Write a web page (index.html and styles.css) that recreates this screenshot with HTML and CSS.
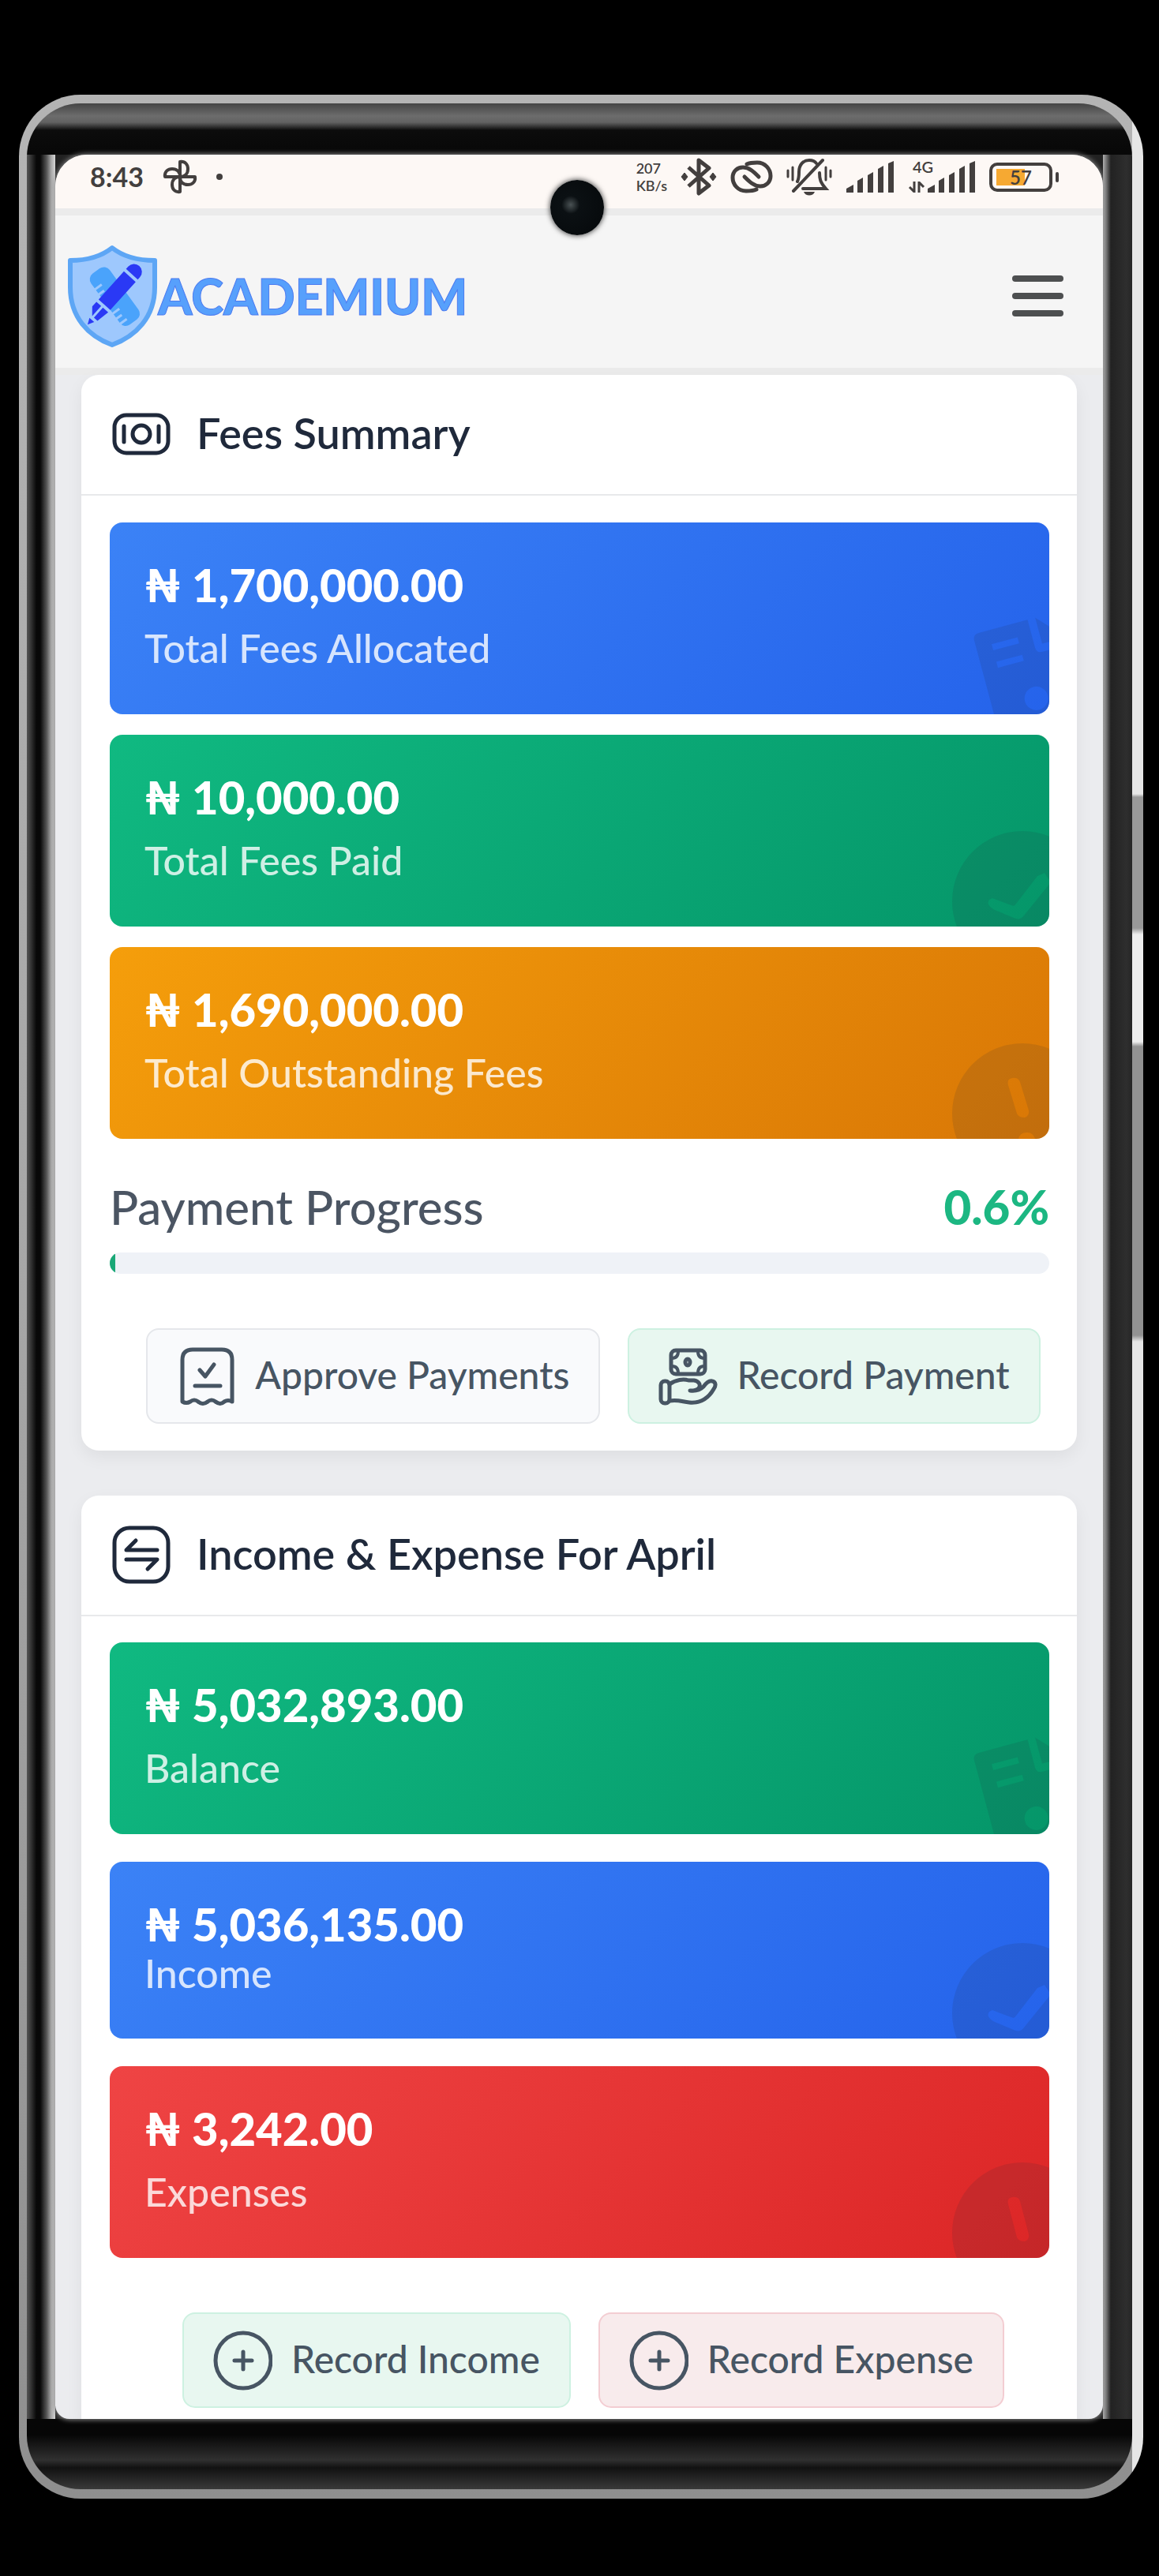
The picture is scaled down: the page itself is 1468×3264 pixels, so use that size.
FILE: index.html
```html
<!DOCTYPE html>
<html lang="en">
<head>
<meta charset="utf-8">
<meta name="viewport" content="width=device-width, initial-scale=1">
<title>Academium</title>
<link rel="stylesheet" href="styles.css">
</head>
<body>
<div class="phone">
<div class="bezel">
<div class="screen">

  <div class="status">
    <span class="clock">8:43</span>
    <svg class="ic-fan" width="44" height="44" viewBox="0 0 44 44" fill="none" stroke="currentColor" stroke-width="4" stroke-linejoin="round"><path d="M22 22V3c7-1 10 4 10 9 0 6-4 10-10 10zM22 22h19c1 7-4 10-9 10-6 0-10-4-10-10zM22 22v19c-7 1-10-4-10-9 0-6 4-10 10-10zM22 22H3c-1-7 4-10 9-10 6 0 10 4 10 10z"/></svg>
    <span class="dot"></span>
    <div class="indicators">
      <span class="speed">207<br>KB/s</span>
      <svg width="46" height="48" viewBox="0 0 46 48" fill="none" stroke="currentColor" stroke-width="5" stroke-linejoin="round"><path d="M10 12l26 23-13 10V3l13 10L10 36"/><path d="M5 19l4 5-4 5-4-5zM41 19l4 5-4 5-4-5z" fill="currentColor" stroke-width="1"/></svg>
      <svg width="54" height="42" viewBox="0 0 54 42" fill="none" stroke="currentColor" stroke-width="5" stroke-linecap="round"><path d="M21 5c4-2 8-2 13-2 10 0 17 8 17 17 0 8-6 13-13 13-8 0-14-6-20-12"/><path d="M33 37c-4 2-8 2-13 2C10 39 3 31 3 22 3 14 9 9 16 9c8 0 14 6 20 12"/></svg>
      <svg width="58" height="48" viewBox="0 0 58 48" fill="none" stroke="currentColor" stroke-width="4" stroke-linecap="round"><path d="M14 30c2-4 2-8 2-12 0-9 5-15 13-15 4 0 7 1 9 4M42 19c0 8 1 12 8 20H21M46 3L9 42"/><path d="M2 16v8M8 12v16M50 12v16M56 16v8" stroke-width="3"/><path d="M22 43h14c-2 6-12 6-14 0z" fill="currentColor" stroke="none"/></svg>
      <svg width="62" height="40" viewBox="0 0 62 40" fill="currentColor"><path d="M1 40v-5l9-5v10zM15 25l7-4v19h-7zM28 18l7-4v26h-7zM41 10l7-4v34h-7zM54 3l7-3v40h-7z"/></svg>
      <div class="mobile">
        <svg width="22" height="14" viewBox="0 0 22 14" fill="none" stroke="currentColor" stroke-width="3"><path d="M8 0v13L2 7M14 14V1l6 6"/></svg>
        <svg width="62" height="40" viewBox="0 0 62 40" fill="currentColor"><path d="M1 40v-5l9-5v10zM15 25l7-4v19h-7zM28 18l7-4v26h-7zM41 10l7-4v34h-7zM54 3l7-3v40h-7z"/></svg>
        <span class="gen">4G</span>
      </div>
      <div class="battery">57</div>
    </div>
  </div>

  <header class="topbar">
    <a class="brand" href="#">
      <svg width="115" height="130" viewBox="0 0 115 130"><path d="M57 4C72 16 90 20 111 20v34c0 38-24 62-54 73C27 116 4 92 4 54V20c20 0 38-4 53-16z" fill="#9ec8fd" stroke="#5da6f5" stroke-width="6" stroke-linejoin="round"/><g transform="rotate(-36 60 66)"><rect x="46" y="26" width="29" height="80" rx="9" fill="#4aa3fb"/><path d="M44 44h12M44 52h10M44 60h12M44 82h12M44 90h10M44 98h12" stroke="#9ec8fd" stroke-width="3"/></g><g transform="rotate(42 60 62)"><path d="M50 29v-4a10 10 0 0 1 20 0v4zM50 33h20v48H50zM50 85h8v17l-8-9zM61 85h9l-3 17h-6zM57 106h8l-4 8z" fill="#2a39f5"/></g></svg>
      <span class="brand-name">ACADEMIUM</span>
    </a>
    <button class="menu" type="button" aria-label="Menu"><span></span><span></span><span></span></button>
  </header>

  <main class="content">
    <section class="card">
      <h2 class="card-head">
        <svg width="76" height="76" viewBox="0 0 76 76" fill="none" stroke="currentColor" stroke-width="5" stroke-linecap="round"><rect x="4" y="14" width="68" height="48" rx="15"/><circle cx="38" cy="38" r="11"/><path d="M16 28v20M60 28v20"/></svg>
        <span>Fees Summary</span>
      </h2>
      <div class="card-body">
        <div class="tiles">
          <div class="tile blue">
            <strong class="amount">₦ 1,700,000.00</strong><span class="label">Total Fees Allocated</span>
            <svg class="mark" width="130" height="130" viewBox="0 0 130 130"><path transform="translate(33 29) rotate(-15)" fill-rule="evenodd" d="M8 0H72V36q0 8 8 8H130V150H0V8Q0 0 8 0zM20 18v8h34v-8zM20 41v8h34v-8zM42 99a15 15 0 1 0 30 0 15 15 0 1 0-30 0zM82 0l32 34H82z"/></svg>
          </div>
          <div class="tile green">
            <strong class="amount">₦ 10,000.00</strong><span class="label">Total Fees Paid</span>
            <svg class="mark" width="130" height="130" viewBox="0 0 130 130"><path fill-rule="evenodd" d="M7 98a89 89 0 1 0 178 0 89 89 0 1 0-178 0zM58 94q-7 2-5 8 2 4 8 7l24 10q8 4 13-3l34-42-8-12-9 4-27 35q-2 4-6 2z"/></svg>
          </div>
          <div class="tile orange">
            <strong class="amount">₦ 1,690,000.00</strong><span class="label">Total Outstanding Fees</span>
            <svg class="mark" width="130" height="130" viewBox="0 0 130 130"><path fill-rule="evenodd" d="M7 98a89 89 0 1 0 178 0 89 89 0 1 0-178 0zM78 62q-2-8 5-9 8-1 10 5l11 36q1 7-5 9-8 0-10-5zM91 130q2-8 10-8 8-1 11 8z"/></svg>
          </div>
        </div>
        <div class="progress-row"><span id="pp">Payment Progress</span><strong class="percent">0.6%</strong></div>
        <div class="track" role="progressbar" aria-labelledby="pp" aria-valuenow="0.6" aria-valuemin="0" aria-valuemax="100"><div class="fill" style="width:0.6%"></div></div>
        <div class="actions">
          <button class="btn" type="button">
            <svg width="75" height="76" viewBox="0 0 75 76" fill="none" stroke="currentColor" stroke-width="5" stroke-linecap="round" stroke-linejoin="round"><path d="M7 70V17Q7 4 20 4H57Q70 4 70 17V70q-5-3-10 0-5 5-11 0-5-4-10 0-6 5-12 0-5-4-10 0-5 3-10 0z"/><path d="M29 30l7 8 11-15M23 50h32"/></svg>
            <span>Approve Payments</span>
          </button>
          <button class="btn mint" type="button">
            <svg width="75" height="76" viewBox="0 0 75 76" fill="none" stroke="currentColor" stroke-width="5" stroke-linecap="round" stroke-linejoin="round"><rect x="16" y="5" width="43" height="30" rx="6"/><ellipse cx="37" cy="20" rx="3" ry="4"/><path d="M17 15q8 0 8-9M58 15q-8 0-8-9M17 25q8 0 8 9M58 25q-8 0-8 9" stroke-width="4"/><rect x="3" y="44" width="11" height="28" rx="5"/><path d="M14 48c8-6 18-7 24-5h7c6 1 8 5 7 8-1 4-5 5-12 5 8 1 13-1 17-5 3-4 7-8 11-7 5 1 5 6 2 10-8 14-20 18-31 17-9-1-15-4-25-2"/></svg>
            <span>Record Payment</span>
          </button>
        </div>
      </div>
    </section>

    <section class="card last">
      <h2 class="card-head">
        <svg width="76" height="76" viewBox="0 0 76 76" fill="none" stroke="currentColor" stroke-width="5" stroke-linecap="round" stroke-linejoin="round"><rect x="4" y="4" width="68" height="68" rx="19"/><path d="M58 32H19L31 20M19 44H58L46 56"/></svg>
        <span>Income &amp; Expense For April</span>
      </h2>
      <div class="card-body">
        <div class="tiles loose">
          <div class="tile green">
            <strong class="amount">₦ 5,032,893.00</strong><span class="label">Balance</span>
            <svg class="mark" width="130" height="130" viewBox="0 0 130 130"><path transform="translate(33 29) rotate(-15)" fill-rule="evenodd" d="M8 0H72V36q0 8 8 8H130V150H0V8Q0 0 8 0zM20 18v8h34v-8zM20 41v8h34v-8zM42 99a15 15 0 1 0 30 0 15 15 0 1 0-30 0zM82 0l32 34H82z"/></svg>
          </div>
          <div class="tile blue compact">
            <strong class="amount">₦ 5,036,135.00</strong><span class="label">Income</span>
            <svg class="mark" width="130" height="130" viewBox="0 0 130 130"><path fill-rule="evenodd" d="M7 98a89 89 0 1 0 178 0 89 89 0 1 0-178 0zM58 94q-7 2-5 8 2 4 8 7l24 10q8 4 13-3l34-42-8-12-9 4-27 35q-2 4-6 2z"/></svg>
          </div>
          <div class="tile red">
            <strong class="amount">₦ 3,242.00</strong><span class="label">Expenses</span>
            <svg class="mark" width="130" height="130" viewBox="0 0 130 130"><path fill-rule="evenodd" d="M7 98a89 89 0 1 0 178 0 89 89 0 1 0-178 0zM78 62q-2-8 5-9 8-1 10 5l11 42q1 7-5 9-8 0-10-5z"/></svg>
          </div>
        </div>
        <div class="actions">
          <button class="btn mint" type="button">
            <svg width="75" height="76" viewBox="0 0 75 76" fill="none" stroke="currentColor" stroke-width="5" stroke-linecap="round"><circle cx="38" cy="38" r="35"/><path d="M38 27v22M27 38h22"/></svg>
            <span>Record Income</span>
          </button>
          <button class="btn rose" type="button">
            <svg width="75" height="76" viewBox="0 0 75 76" fill="none" stroke="currentColor" stroke-width="5" stroke-linecap="round"><circle cx="38" cy="38" r="35"/><path d="M38 27v22M27 38h22"/></svg>
            <span>Record Expense</span>
          </button>
        </div>
      </div>
    </section>
  </main>
</div>
<span class="camera"></span>
</div>
</div>
</body>
</html>
```

FILE: styles.css
```css
* { box-sizing: border-box; }

body {
  margin: 0;
  padding: 120px 20px 97px 24px;
  background: #000;
  font-family: Lato, "Noto Sans", sans-serif;
  font-weight: 500;
}

/* Metal rim around the handset */
.phone {
  padding: 11px 14px 12px 10px;
  border-radius: 78px;
  background:
    linear-gradient(180deg, #e6e6e6 0 886px, #999 890px 1056px, #eee 1064px 1200px, #929292 1206px 1572px, #e6e6e6 1580px) right / 14px 100% no-repeat,
    linear-gradient(180deg, #b4b4b4, #a6a6a6 50%, #8f8f8f);
}

.bezel {
  position: relative;
  padding: 65px 37px 89px 36px;
  border-radius: 68px;
  overflow: hidden;
  background:
    linear-gradient(180deg, #444, #6c6c6c 16px, #626262 24px, #0c0c0c 34px, #080808 60px) top / 100% 65px no-repeat,
    linear-gradient(180deg, #060606 20px, #303030 52px, #111 62px, #3a3a3a 89px) bottom / 100% 89px no-repeat,
    linear-gradient(90deg, #555, #3c3c3c 4px, #080808 12px 17px, #555 25px, #aaa 31px, #d8d8d8 36px) left / 36px 100% no-repeat,
    linear-gradient(90deg, #b0b0b0, #777 4px, #222 10px, #2e2e2e 30px, #252525) right / 37px 100% no-repeat,
    #222;
}

.screen {
  background: #ebecef;
  border-radius: 40px 40px 18px 18px;
  box-shadow: 0 0 6px 1px #8a8a8a;
  overflow: hidden;
}

.camera {
  position: absolute;
  top: 97px;
  left: 50%;
  width: 68px;
  height: 70px;
  margin-left: -37px;
  border-radius: 50%;
  background: radial-gradient(circle at 38% 45%, #4a5254, #0b1013 20%, #05080a);
  box-shadow: 0 0 6px 1px #555;
}

.status {
  display: flex;
  align-items: center;
  height: 68px;
  padding: 0 56px 12px 44px;
  background: #fdf8f5;
  color: #433f3e;
}
.clock { font-size: 34px; line-height: 40px; font-weight: 700; margin-right: 24px; }
.dot { width: 8px; height: 8px; margin-left: 24px; border-radius: 50%; background: currentColor; }
.indicators { display: flex; align-items: center; gap: 17px; margin-left: auto; }
.speed { font-size: 18px; line-height: 22px; font-weight: 600; }
.mobile { position: relative; display: flex; align-items: flex-end; gap: 2px; }
.gen { position: absolute; left: 6px; top: -4px; font-size: 20px; line-height: 22px; font-weight: 600; }
.battery {
  position: relative;
  width: 80px;
  height: 37px;
  margin-right: 8px;
  border: 4px solid currentColor;
  border-radius: 10px;
  background: linear-gradient(90deg, #f6a932 36px, transparent 36px) 5px 4px / 100% 21px no-repeat;
  font-size: 24px;
  line-height: 29px;
  font-weight: 600;
  text-align: center;
}
.battery::after {
  content: "";
  position: absolute;
  right: -12px;
  top: 8px;
  width: 4px;
  height: 13px;
  border-radius: 2px;
  background: currentColor;
}

.topbar {
  display: flex;
  align-items: center;
  justify-content: space-between;
  height: 211px;
  padding: 10px 50px 0 15px;
  border: solid #ebebeb;
  border-width: 9px 0;
  background: #f5f5f5;
}
.brand { display: flex; align-items: center; color: #57a0fc; text-decoration: none; }
.brand-name {
  font-size: 62px;
  line-height: 72px;
  font-weight: 900;
  -webkit-text-stroke: 1px #4c7cf0;
}
.menu {
  display: flex;
  flex-direction: column;
  gap: 14px;
  padding: 0;
  border: 0;
  background: none;
}
.menu span { width: 65px; height: 8px; border-radius: 4px; background: #4d4f50; }

.content {
  display: flex;
  flex-direction: column;
  gap: 57px;
  padding: 0 33px;
}
.card { background: #fff; border-radius: 22px; box-shadow: 0 8px 22px rgba(0, 0, 0, 0.06); }
.card.last { border-radius: 22px 22px 0 0; }
.card-head {
  display: flex;
  align-items: center;
  gap: 32px;
  height: 153px;
  margin: 0;
  padding: 0 38px 2px;
  border-bottom: 2px solid #e8e9eb;
  color: #1f293b;
  font-size: 54px;
  line-height: 72px;
  font-weight: 600;
}
.card-head span { padding-bottom: 2px; }
.card-body { padding: 34px 35px 34px 36px; }
.last .card-body { padding: 33px 35px 14px 36px; }

.tiles { display: flex; flex-direction: column; gap: 26px; }
.tiles.loose { gap: 35px; }
.tile {
  position: relative;
  display: flex;
  flex-direction: column;
  gap: 18px;
  padding: 47px 44px 54px;
  border-radius: 16px;
  overflow: hidden;
  color: #fff;
}
.tile.compact { gap: 0; padding-bottom: 53px; }
.blue { background: linear-gradient(135deg, #3b82f6, #2563eb); }
.green { background: linear-gradient(135deg, #10b981, #059669); }
.orange { background: linear-gradient(135deg, #f59e0b, #d97706); }
.red { background: linear-gradient(135deg, #ef4444, #dc2626); }
.amount { font-size: 58px; line-height: 64px; font-weight: 900; }
.label { font-size: 50px; line-height: 60px; color: rgba(255, 255, 255, 0.8); }
.mark { position: absolute; right: 0; bottom: 0; fill: rgba(30, 41, 59, 0.12); }

.progress-row {
  display: flex;
  justify-content: space-between;
  margin-top: 50px;
  color: #4b5563;
  font-size: 60px;
  line-height: 72px;
}
.percent { color: #1cb782; font-weight: 900; }
.track { height: 27px; margin-top: 22px; border-radius: 14px; background: #eff2f7; overflow: hidden; }
.fill { height: 100%; background: #1aa877; }

.actions { display: flex; justify-content: center; gap: 35px; margin-top: 69px; padding-left: 35px; }
.btn {
  display: flex;
  align-items: center;
  gap: 24px;
  height: 121px;
  padding: 0 37px;
  border: 2px solid #e5e7eb;
  border-radius: 16px;
  background: #f9fafc;
  color: #475563;
  font: inherit;
  font-size: 48px;
  line-height: 60px;
  white-space: nowrap;
}
.btn span { padding-bottom: 4px; }
.mint { background: #e8f7f0; border-color: #cdf1e1; }
.rose { background: #f8ebec; border-color: #f3cdd2; }
```
